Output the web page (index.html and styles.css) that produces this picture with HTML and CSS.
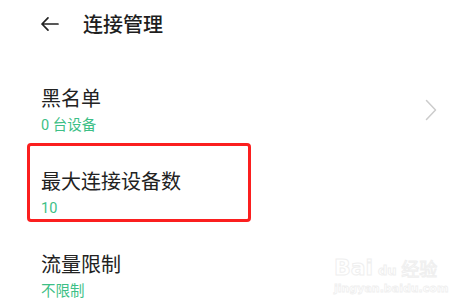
FILE: index.html
```html
<!DOCTYPE html>
<html lang="zh-CN">
<head>
<meta charset="utf-8">
<link rel="stylesheet" href="styles.css">
</head>
<body>
<div class="screen">
  <header class="topbar">
    <svg class="back" width="19" height="16" viewBox="0 0 19 16" aria-hidden="true">
      <path d="M18 8H2M8 1.8L2 8l6 6.2" fill="none" stroke="#222" stroke-width="1.7" stroke-linecap="round" stroke-linejoin="round"/>
    </svg>
    <h1 class="title">连接管理</h1>
  </header>
  <ul class="list">
    <li class="item">
      <div class="text">
        <div class="item-title">黑名单</div>
        <div class="item-sub">0 台设备</div>
      </div>
      <svg class="chev" width="12" height="22" viewBox="0 0 12 22" aria-hidden="true">
        <path d="M1.5 1.5L10.5 11l-9 9.5" fill="none" stroke="#cccccc" stroke-width="1.5" stroke-linecap="round" stroke-linejoin="round"/>
      </svg>
    </li>
    <li class="item highlighted">
      <div class="text">
        <div class="item-title">最大连接设备数</div>
        <div class="item-sub">10</div>
      </div>
      <div class="mark"></div>
    </li>
    <li class="item">
      <div class="text">
        <div class="item-title">流量限制</div>
        <div class="item-sub">不限制</div>
      </div>
    </li>
  </ul>
  <div class="watermark" aria-hidden="true">
    <div class="wm-logo">
      <span class="wm-bai">Bai</span>
      <span class="wm-paw"><span class="wm-du">du</span></span>
      <span class="wm-jy">经验</span>
    </div>
    <div class="wm-url">jingyan.baidu.com</div>
  </div>
</div>
</body>
</html>
```
FILE: styles.css
```css
* { box-sizing: border-box; }
html, body {
  margin: 0;
  padding: 0;
  background: #fff;
}
body {
  font-family: "Noto Sans CJK SC", "Noto Sans", sans-serif;
  color: #222;
}
.screen {
  position: relative;
  width: 452px;
  height: 304px;
  overflow: hidden;
}
.topbar {
  height: 48px;
  display: flex;
  align-items: center;
  padding-left: 40px;
  gap: 24px;
  margin-bottom: 21px;
}
.back { display: block; flex: none; }
.title {
  margin: 0;
  font-size: 20px;
  font-weight: 500;
  line-height: 28px;
  color: #1e1e1e;
}
.list {
  list-style: none;
  margin: 0;
  padding: 0;
}
.item {
  position: relative;
  height: 83px;
  display: flex;
  align-items: center;
  justify-content: space-between;
  padding: 15px 15px 16px 41px;
}
.item-title {
  font-size: 20px;
  line-height: 28px;
  color: #222;
}
.item-sub {
  margin-top: 4px;
  font-family: Roboto, "Noto Sans CJK SC", sans-serif;
  font-size: 14.5px;
  line-height: 20px;
  color: #3dbf86;
}
.chev { display: block; flex: none; }
.mark {
  position: absolute;
  left: 27px;
  top: -9px;
  width: 224px;
  height: 79px;
  border: 3.5px solid #fb1f1f;
  border-radius: 4px;
}
.watermark {
  position: absolute;
  left: 334px;
  top: 246px;
  font-family: "DejaVu Sans", sans-serif;
}
.wm-logo {
  display: flex;
  align-items: flex-end;
  gap: 2px;
  height: 34px;
}
.wm-bai {
  font-size: 22px;
  font-weight: bold;
  line-height: 24px;
  color: #fff;
  -webkit-text-stroke: 1px #efefef;
}
.wm-paw {
  position: relative;
  width: 24px;
  height: 30px;
  display: flex;
  align-items: flex-end;
  justify-content: center;
}
.wm-du {
  font-size: 13px;
  font-weight: bold;
  line-height: 18px;
  color: #fff;
  -webkit-text-stroke: 1px #efefef;
}
.wm-jy {
  font-family: "Noto Sans CJK SC", sans-serif;
  font-size: 18px;
  line-height: 24px;
  color: #fff;
  -webkit-text-stroke: 1px #efefef;
}
.wm-url {
  margin-top: 2px;
  font-size: 11px;
  font-weight: bold;
  line-height: 14px;
  color: #fff;
  -webkit-text-stroke: 0.8px #efefef;
}
```
